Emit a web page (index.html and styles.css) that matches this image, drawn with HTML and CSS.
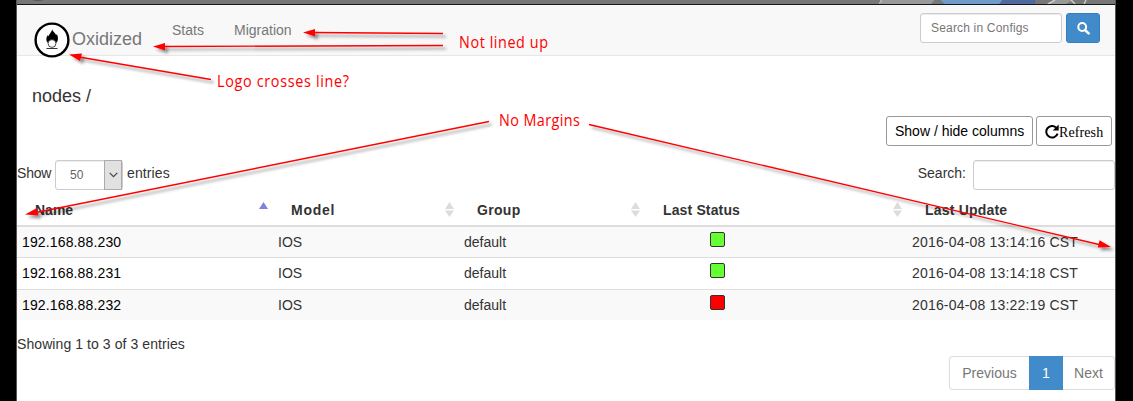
FILE: index.html
```html
<!DOCTYPE html>
<html lang="en">
<head>
<meta charset="utf-8">
<title>Oxidized</title>
<link rel="stylesheet" href="styles.css">
</head>
<body>
<div class="window">
  <svg class="wallpaper" viewBox="0 0 1100 5" preserveAspectRatio="none" aria-hidden="true">
    <rect width="1100" height="5" fill="#777"/>
    <path d="M15 0h12q-3 1-6 1t-6-1z" fill="#555"/>
    <path d="M865 0h54l-3 4h-50z" fill="#999"/>
    <path d="M866 0l-2 4" stroke="#bbb" stroke-width="1.500"/>
    <path d="M925 0h95v4h-91z" fill="#5068a0"/>
    <path d="M925 0h62l-3 4h-55z" fill="#6f9bcb"/>
    <path d="M1039 0h19l-7 4h-20z" fill="#999"/>
    <path d="M1040 0l-7 4M1056 0l4 4M1071 0l-2 4" stroke="#ccc" stroke-width="1.500"/>
    <rect y="4" width="1100" height="1" fill="#151515"/>
  </svg>
  <nav class="navbar">
    <a class="brand">
      <svg class="logo" viewBox="0 0 36 36">
        <circle cx="18" cy="18" r="16.400" fill="#fff" stroke="#000" stroke-width="2.400"/>
        <path d="M18 7c.2 2.300 3.200 3.700 4.300 6.200l.6-1.200c1.600 3.600 1.300 6.700-.3 8.700-1.300-2.300-7.900-2.300-9.200 0-1.700-2.200-1.200-5.800.5-7.700l.9 1.200C15.200 11.400 18.400 9.700 18 7z" fill="#000"/>
        <circle cx="18" cy="21.500" r="3.900" fill="#fff" stroke="#000" stroke-width=".7"/>
        <path d="M12.500 26.500h11" stroke="#333" stroke-width="1"/>
      </svg>
      <span class="brand-name">Oxidized</span>
    </a>
    <a class="nav-link stats">Stats</a>
    <a class="nav-link">Migration</a>
    <form class="config-search">
      <span class="field config-field">Search in Configs</span>
      <span class="search-button"><svg width="13" height="13" viewBox="0 0 13 13"><circle cx="5.200" cy="5" r="3.900" fill="none" stroke="#fff" stroke-width="2"/><path d="M8 8l3.600 3.400" stroke="#fff" stroke-width="2.500" stroke-linecap="round"/></svg></span>
    </form>
  </nav>
  <h1 class="title">nodes /</h1>
  <div class="actions">
    <span class="action columns">Show / hide columns</span>
    <span class="action refresh"><svg width="14" height="15" viewBox="0 0 14 15"><path d="M11 3.400A5.800 5.800 0 1 0 12.600 9.600" fill="none" stroke="#000" stroke-width="2"/><path d="M13.700.5v6H7.700z" fill="#000"/></svg><span class="refresh-label">Refresh</span></span>
  </div>
  <div class="controls">
    <span class="show">Show</span>
    <span class="field select"><span class="value">50</span><span class="chevron"><svg width="9" height="6" viewBox="0 0 9 6"><path d="M.7.8l3.800 3.800L8.300.8" fill="none" stroke="#444" stroke-width="1.200"/></svg></span></span>
    <span class="entries">entries</span>
    <span class="search-label">Search:</span>
    <span class="field filter"></span>
  </div>
  <table class="nodes">
    <colgroup><col class="c-name"><col class="c-model"><col class="c-group"><col class="c-status"><col></colgroup>
    <thead><tr>
      <th><div class="head"><span>Name</span><svg class="sort" viewBox="0 0 9 15"><path d="M0 7l4.500-7L9 7z" fill="#7f82e0"/></svg></div></th>
      <th><div class="head"><span class="w-model">Model</span><svg class="sort" viewBox="0 0 9 15"><path d="M0 7l4.500-7L9 7zM0 8.500l4.500 6.500L9 8.500z" fill="#dcdcdc"/></svg></div></th>
      <th><div class="head"><span class="w-group">Group</span><svg class="sort" viewBox="0 0 9 15"><path d="M0 7l4.500-7L9 7zM0 8.500l4.500 6.500L9 8.500z" fill="#dcdcdc"/></svg></div></th>
      <th><div class="head"><span class="w-status">Last Status</span><svg class="sort" viewBox="0 0 9 15"><path d="M0 7l4.500-7L9 7zM0 8.500l4.500 6.500L9 8.500z" fill="#dcdcdc"/></svg></div></th>
      <th><div class="head"><span class="w-update">Last Update</span></div></th>
    </tr></thead>
    <tbody>
      <tr><td class="ip">192.168.88.230</td><td>IOS</td><td>default</td><td><i class="status ok"></i></td><td class="date">2016-04-08 13:14:16 CST</td></tr>
      <tr><td class="ip">192.168.88.231</td><td>IOS</td><td>default</td><td><i class="status ok"></i></td><td class="date">2016-04-08 13:14:18 CST</td></tr>
      <tr><td class="ip">192.168.88.232</td><td>IOS</td><td>default</td><td><i class="status fail"></i></td><td class="date">2016-04-08 13:22:19 CST</td></tr>
    </tbody>
  </table>
  <div class="info">Showing 1 to 3 of 3 entries</div>
  <div class="pagination"><span class="page prev">Previous</span><span class="page current">1</span><span class="page next">Next</span></div>
</div>
<svg class="notes" width="1133" height="401" viewBox="0 0 1133 401">
  <defs><filter id="shadow" x="0" y="0" width="1133" height="401" filterUnits="userSpaceOnUse"><feDropShadow dx="3" dy="3" stdDeviation="1.500" flood-color="#000" flood-opacity=".42"/></filter></defs>
  <g filter="url(#shadow)" stroke="#f00" stroke-width="1.400" fill="#f00">
    <path d="M443 33.500L312 32.500M443 45.500L162 46.500M211 79.500L79 57M489 121.500L36 212.500M589 124.500L1099 244.500"/>
    <path stroke="none" d="M303 32.500l12-3.500v7.500zM153 46.500l12-3.500v7.500zM69 54.500l13-1-2 7.500zM25 214.500l11.500-6.200 1.500 7.200zM1111 247l-13.200.5 1.800-7.200z"/>
  </g>
  <g class="note-text">
    <text transform="translate(459 48) scale(.9 1)" textLength="98.900">Not lined up</text>
    <text transform="translate(217 87) scale(.9 1)" textLength="146.700">Logo crosses line?</text>
    <text transform="translate(499 126) scale(.9 1)" textLength="90">No Margins</text>
  </g>
</svg>
</body>
</html>
```
FILE: styles.css
```css
* { box-sizing: border-box; }
body {
  margin: 0;
  height: 401px;
  overflow: hidden;
  background: #000;
  color: #333;
  font: 14px/20px "Liberation Sans", Arial, sans-serif;
}
.window {
  width: 1100px;
  height: 401px;
  margin-left: 16px;
  background: #fff;
  border: solid #555;
  border-width: 0 1px;
}
.wallpaper { display: block; width: 1098px; height: 5px; }
.navbar {
  display: flex;
  align-items: flex-start;
  height: 51px;
  background: #f8f8f8;
  border-bottom: 1px solid #e7e7e7;
  color: #777;
}
.brand { display: flex; padding: 17px 0 0 17px; height: 50px; }
.logo { width: 36px; height: 36px; flex: none; }
.brand-name { width: 100px; padding-left: 2px; font-size: 18px; line-height: 35px; }
.nav-link { padding-top: 15px; width: 62px; }
.nav-link.stats { margin-left: 2px; }
.config-search { display: flex; gap: 4px; margin: 8px 15px 0 auto; }
.field {
  height: 30px;
  border: 1px solid #ccc;
  border-radius: 3px;
  background: #fff;
  box-shadow: inset 0 1px 1px rgba(0, 0, 0, .075);
}
.config-field { width: 142px; padding-left: 10px; font-size: 12px; line-height: 28px; letter-spacing: .18px; }
.search-button {
  display: flex;
  align-items: center;
  justify-content: center;
  width: 34px;
  height: 30px;
  border: 1px solid #357ebd;
  border-radius: 3px;
  background: #428bca;
}
.title { margin: 0; padding: 30px 0 0 15px; height: 60px; font-size: 18px; font-weight: 400; line-height: 20px; }
.actions { display: flex; justify-content: flex-end; gap: 3px; height: 44px; padding-right: 3px; }
.action {
  display: flex;
  align-items: center;
  height: 30px;
  border: 1px solid #999;
  border-radius: 3px;
  color: #000;
}
.columns { width: 147px; padding-left: 8px; }
.refresh { width: 76px; padding-left: 8px; font: 14px/20px "Liberation Serif", serif; }
.refresh-label { padding-top: 3px; letter-spacing: .1px; }
.controls { display: flex; height: 36px; line-height: 27px; }
.show { width: 38px; letter-spacing: -.2px; }
.entries { letter-spacing: .12px; }
.select { display: flex; width: 68px; margin-right: 4px; font-size: 12px; line-height: 29px; color: #666; }
.value { width: 49px; padding-left: 14px; }
.chevron {
  display: flex;
  align-items: center;
  justify-content: center;
  width: 18px;
  height: 30px;
  margin-top: -1px;
  background: #e1e1e1;
  border: 1px solid #aaa;
}
.search-label { margin: 0 7px 0 auto; }
.filter { width: 142px; }
.nodes { width: 1098px; table-layout: fixed; border-collapse: separate; border-spacing: 0; }
.c-name { width: 256px; }
.c-model, .c-group { width: 186px; }
.c-status { width: 262px; }
.nodes th { height: 31px; padding: 0 5px 0 18px; border-bottom: 2px solid #ddd; text-align: left; }
.head { display: flex; justify-content: space-between; align-items: center; height: 29px; padding-bottom: 2px; }
.sort { width: 9px; height: 15px; }
.w-model { letter-spacing: .75px; }
.w-group { letter-spacing: .3px; }
.w-status { letter-spacing: .14px; }
.w-update { letter-spacing: .2px; }
.nodes td { height: 31.500px; padding: 0 5px; border-top: 1px solid #ddd; }
.nodes tr:first-child td { height: 30px; border-top: 0; }
.nodes tbody tr:nth-child(odd) { background: #f9f9f9; }
.nodes .ip { color: #000; letter-spacing: .14px; }
.nodes .date { letter-spacing: .18px; }
.status {
  display: block;
  width: 15px;
  height: 15px;
  margin: -5px 0 0 60px;
  border: 1px solid #333;
  border-radius: 2px;
}
.ok { background: #6f3; }
.fail { background: #f00; }
.info { height: 36px; padding-top: 14px; letter-spacing: .08px; }
.pagination { display: flex; justify-content: flex-end; color: #777; }
.page { height: 34px; border: 1px solid #ddd; line-height: 32px; text-align: center; }
.prev { width: 80px; border-right: 0; border-radius: 4px 0 0 4px; }
.current { width: 34px; border-color: #428bca; background: #428bca; color: #fff; }
.next { width: 52px; border-left: 0; border-radius: 0 4px 4px 0; }
.notes { position: absolute; top: 0; left: 0; }
.note-text { fill: #f00; font: 16px "Open Sans", "Noto Sans", sans-serif; }
```
